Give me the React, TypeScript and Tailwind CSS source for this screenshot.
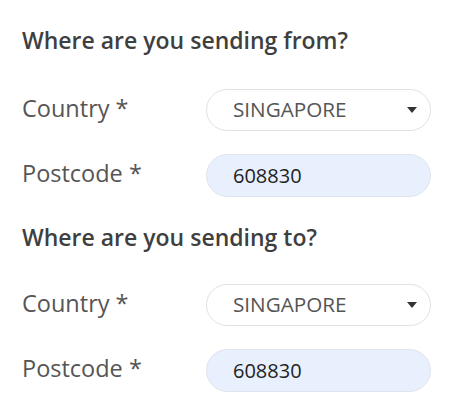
import React from "react";

const font = { fontFamily: '"Open Sans", "Liberation Sans", sans-serif' };

function Section({ title, top, gap }: { title: string; top: string; gap: string }) {
  return (
    <div className={top}>
      <h2 className="text-[23px] leading-[30px] font-semibold text-[#3f3f3f]">{title}</h2>
      <div className={`${gap} flex flex-col gap-[23px]`}>
        <div className="flex items-center">
          <label className="w-[184px] pb-[5px] text-[23.5px] leading-[30px] text-[#555]">Country *</label>
          <div className="w-[225px] h-[42px] rounded-full border border-[#e2e2e2] bg-white flex items-center pl-[26px] pr-[13px]">
            <span className="flex-1 text-[20.7px] text-[#555]">SINGAPORE</span>
            <svg width="10" height="6" viewBox="0 0 10 6">
              <path d="M0 0 L10 0 L5 6 Z" fill="#333" />
            </svg>
          </div>
        </div>
        <div className="flex items-center">
          <label className="w-[184px] pb-[5px] text-[23.5px] leading-[30px] text-[#555]">Postcode *</label>
          <div className="w-[225px] h-[43px] rounded-full border border-[#dfe4ec] bg-[#e8f0fe] flex items-center pl-[26px]">
            <span className="text-[20px] text-[#222]">608830</span>
          </div>
        </div>
      </div>
    </div>
  );
}

export default function App() {
  return (
    <div className="w-[456px] h-[412px] bg-white pl-[22px]" style={font}>
      <Section title="Where are you sending from?" top="pt-[25px]" gap="mt-[34px]" />
      <Section title="Where are you sending to?" top="mt-[25px]" gap="mt-[32px]" />
    </div>
  );
}
